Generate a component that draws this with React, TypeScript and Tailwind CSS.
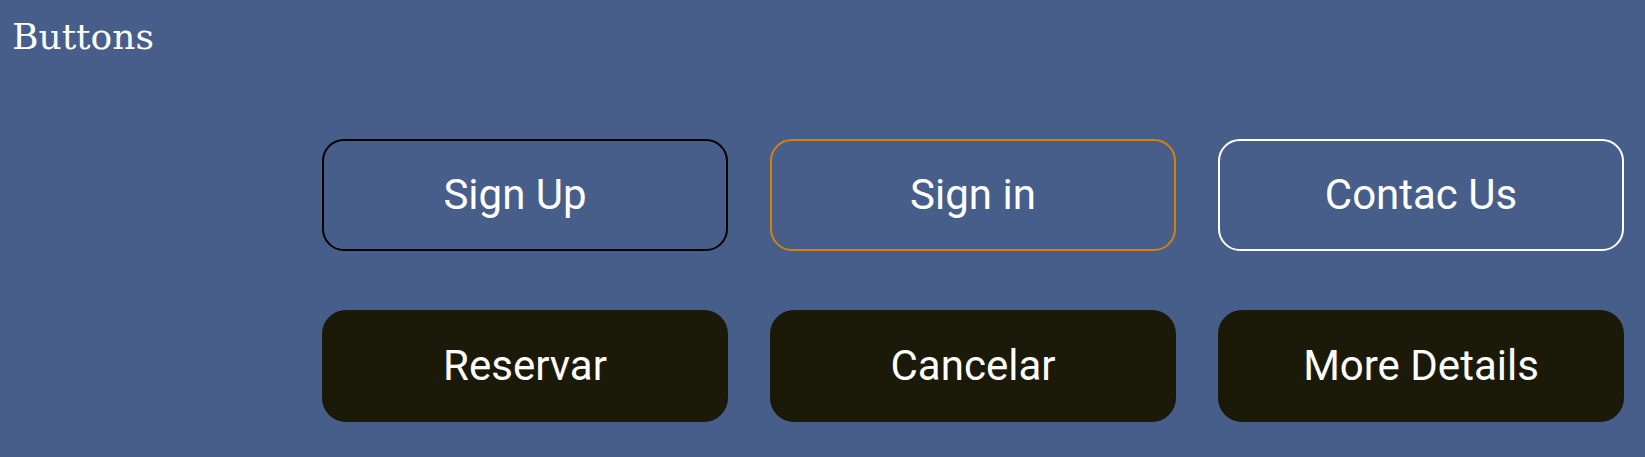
import React from "react";

const outline = [
  { label: "Sign Up", border: "border-black", extra: "pr-[20px]" },
  { label: "Sign in", border: "border-[#d3820c]", extra: "" },
  { label: "Contac Us", border: "border-white", extra: "" },
];
const solid = ["Reservar", "Cancelar", "More Details"];

export default function App() {
  return (
    <div className="w-[1645px] h-[457px] bg-[#475e8a] overflow-hidden">
      <h1
        className="pl-[12px] pt-[17px] text-[36px] leading-[40px] text-white font-normal"
        style={{ fontFamily: '"DejaVu Serif", "Liberation Serif", serif' }}
      >
        Buttons
      </h1>
      <div
        className="ml-[322px] mt-[82px] grid grid-cols-[406px_406px_406px] gap-x-[42px] gap-y-[59px]"
        style={{ fontFamily: 'Roboto, "Liberation Sans", sans-serif' }}
      >
        {outline.map((b) => (
          <button
            key={b.label}
            className={`h-[112px] rounded-[22px] border-2 ${b.border} ${b.extra} bg-transparent text-white text-[42px] leading-none flex items-center justify-center`}
          >
            {b.label}
          </button>
        ))}
        {solid.map((l) => (
          <button
            key={l}
            className="h-[112px] rounded-[24px] bg-[#1b1a09] text-white text-[42px] leading-none flex items-center justify-center"
          >
            {l}
          </button>
        ))}
      </div>
    </div>
  );
}
